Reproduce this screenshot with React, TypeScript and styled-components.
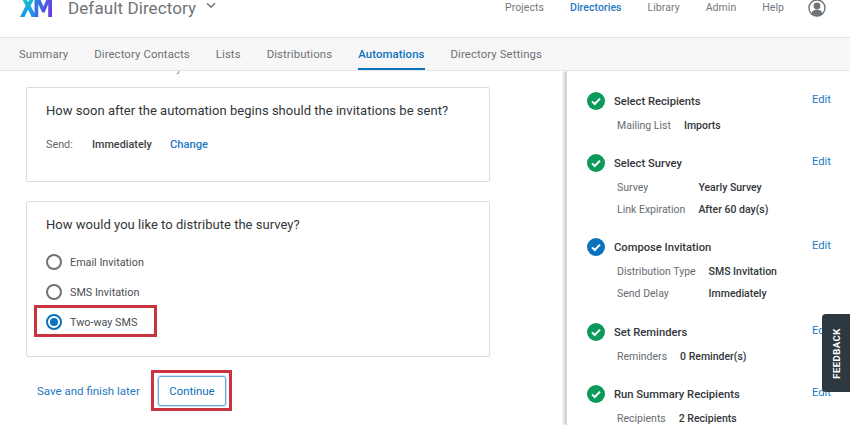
import React from "react";
import styled, { createGlobalStyle, css } from "styled-components";

const Global = createGlobalStyle`
  html, body { margin: 0; padding: 0; background: #fff; }
  body { font-family: Roboto, "Noto Sans", sans-serif; color: #32363a; }
  #root { width: 850px; height: 425px; overflow: hidden; }
`;

const Page = styled.div`
  position: relative;
  width: 850px;
  height: 425px;
  overflow: hidden;
  display: flex;
  flex-direction: column;
`;

const Header = styled.header`
  flex: 0 0 38px;
  box-sizing: border-box;
  border-bottom: 1px solid #e3e3e3;
  display: flex;
  align-items: flex-start;
  padding-left: 20px;
  overflow: hidden;
`;

const Logo = styled.svg`
  flex: none;
  width: 32px;
  height: 22px;
  margin-top: -5px;
`;

const DirectoryName = styled.span`
  margin-left: 16px;
  font-size: 17px;
  line-height: 16px;
  letter-spacing: 0.1px;
  color: #6f7478;
  white-space: nowrap;
`;

const Chevron = styled.svg`
  width: 10px;
  height: 7px;
  margin: 2px 0 0 10px;
  flex: none;
`;

const TopNav = styled.nav`
  margin-left: auto;
  display: flex;
  gap: 26px;
  align-items: center;
  height: 16px;
  padding-right: 24px;
`;

const TopLink = styled.span<{ $active?: boolean }>`
  font-size: 10.5px;
  line-height: 16px;
  letter-spacing: 0.05px;
  color: ${(p) => (p.$active ? "#1f7ac4" : "#73787c")};
  font-weight: ${(p) => (p.$active ? 500 : 400)};
`;

const Avatar = styled.svg`
  width: 18px;
  height: 18px;
  flex: none;
  margin-left: -2px;
`;

const Tabs = styled.nav`
  flex: 0 0 32px;
  box-sizing: border-box;
  background: #f7f7f7;
  border-bottom: 1px solid #e6e6e6;
  display: flex;
  gap: 26px;
  padding-left: 19px;
  position: relative;
  z-index: 2;
`;

const Tab = styled.span<{ $active?: boolean }>`
  height: 32px;
  box-sizing: border-box;
  padding-top: 8px;
  font-size: 11.4px;
  line-height: 16px;
  letter-spacing: 0.09px;
  white-space: nowrap;
  color: #6d7276;
  ${(p) =>
    p.$active &&
    css`
      color: #0b72bd;
      font-weight: 500;
      border-bottom: 2px solid #0b72bd;
    `}
`;

const Body = styled.div`
  flex: 1;
  min-height: 0;
  display: flex;
`;

const Main = styled.main`
  flex: 0 0 566px;
  box-sizing: border-box;
  padding-left: 26px;
  overflow: hidden;
`;

const ScrolledLine = styled.div`
  height: 3px;
  margin-bottom: 13px;
  overflow: hidden;
  font-size: 12px;
  line-height: 16px;
  color: #8a8e92;
  padding-left: 11px;
  & > span { display: block; margin-top: -12px; }
`;

const Card = styled.section<{ $height: number }>`
  box-sizing: border-box;
  width: 464px;
  height: ${(p) => p.$height}px;
  margin-bottom: 19px;
  border: 1px solid #dcdcdc;
  border-radius: 2px;
  padding: 13px 19px 0;
`;

const Question = styled.h2`
  margin: 0;
  font-size: 13px;
  line-height: 20px;
  font-weight: 400;
  letter-spacing: 0.03px;
  color: #32363a;
  white-space: nowrap;
`;

const SendRow = styled.div`
  margin-top: 14px;
  display: flex;
  font-size: 10.8px;
  line-height: 20px;
`;

const SendLabel = styled.span`
  width: 46px;
  color: #63686c;
`;

const SendValue = styled.span`
  width: 78px;
  font-weight: 500;
  color: #3c4044;
`;

const ChangeLink = styled.span`
  color: #1f7ac4;
  font-weight: 500;
  font-size: 11.2px;
`;

const RadioList = styled.div`
  margin-top: 17px;
  display: flex;
  flex-direction: column;
  gap: 10px;
`;

const RadioRow = styled.label<{ $marked?: boolean }>`
  position: relative;
  height: 20px;
  display: flex;
  align-items: center;
  gap: 8px;
  font-size: 10.8px;
  color: #4a4e52;
  ${(p) =>
    p.$marked &&
    css`
      &::after {
        content: "";
        position: absolute;
        left: -12px;
        top: -7px;
        width: 123px;
        height: 32px;
        box-sizing: border-box;
        border: 3px solid #c9353f;
      }
    `}
`;

const RadioDot = styled.span<{ $checked?: boolean }>`
  flex: none;
  box-sizing: border-box;
  width: 16px;
  height: 16px;
  border-radius: 50%;
  border: 2px solid ${(p) => (p.$checked ? "#0b72bd" : "#6f7377")};
  display: flex;
  align-items: center;
  justify-content: center;
  &::before {
    content: "";
    width: 8px;
    height: 8px;
    border-radius: 50%;
    background: ${(p) => (p.$checked ? "#0b72bd" : "transparent")};
  }
`;

const Actions = styled.div`
  display: flex;
  align-items: center;
  padding-left: 11px;
`;

const SaveLink = styled.span`
  width: 121px;
  font-size: 11.5px;
  color: #1f7ac4;
  white-space: nowrap;
`;

const ContinueButton = styled.button`
  position: relative;
  width: 68px;
  height: 30px;
  padding: 0;
  box-sizing: border-box;
  background: #fff;
  border: 1px solid #6aa9d8;
  border-radius: 3px;
  box-shadow: 0 0 0 1px #cfe3f3;
  color: #0b72bd;
  font-family: inherit;
  font-size: 11.4px;
  &::after {
    content: "";
    position: absolute;
    left: -8px;
    top: -7px;
    width: 81px;
    height: 41px;
    box-sizing: border-box;
    border: 3px solid #c9353f;
  }
`;

const Side = styled.aside`
  flex: 1;
  box-sizing: border-box;
  padding: 20px 0 0 20px;
  box-shadow: -2px 0 3px rgba(0, 0, 0, 0.22);
  border-left: 1px solid #d8d8d8;
  overflow: hidden;
`;

const Step = styled.div`
  margin-bottom: 17px;
  &:nth-child(3) { margin-bottom: 18px; }
`;

const StepHead = styled.div`
  display: flex;
  align-items: center;
  height: 20px;
  margin-bottom: 3px;
`;

const StepTitle = styled.span`
  margin-left: 9px;
  font-size: 11.2px;
  font-weight: 500;
  color: #32363a;
  white-space: nowrap;
`;

const EditLink = styled.span`
  margin-left: auto;
  margin-right: 19px;
  margin-top: -4px;
  font-size: 11.2px;
  color: #1f7ac4;
`;

const StepIcon = styled.svg`
  width: 18px;
  height: 18px;
  flex: none;
`;

const Details = styled.div`
  display: inline-grid;
  grid-template-columns: auto auto;
  column-gap: 13px;
  grid-auto-rows: 22px;
  align-items: center;
  margin-left: 30px;
  vertical-align: top;
  font-size: 10.5px;
`;

const DetailLabel = styled.span`
  color: #676c70;
  white-space: nowrap;
`;

const DetailValue = styled.span`
  color: #32363a;
  font-weight: 500;
  white-space: nowrap;
`;

const FeedbackTab = styled.div`
  position: absolute;
  right: 0;
  top: 314px;
  width: 28px;
  height: 78px;
  background: #2d3840;
  border-radius: 4px 0 0 4px;
  display: flex;
  align-items: center;
  justify-content: center;
  color: #fff;
  font-size: 9.6px;
  font-weight: 700;
  letter-spacing: 0.4px;
  & > span { transform: rotate(-90deg); white-space: nowrap; }
`;

const CheckBadge = ({ color }: { color: string }) => (
  <StepIcon viewBox="0 0 18 18">
    <circle cx="9" cy="9" r="9" fill={color} />
    <path d="M5 9.4l2.7 2.6L13 6.6" fill="none" stroke="#fff" strokeWidth="2" />
  </StepIcon>
);

const steps = [
  { title: "Select Recipients", color: "#0b9a5a", rows: [["Mailing List", "Imports"]] },
  { title: "Select Survey", color: "#0b9a5a", rows: [["Survey", "Yearly Survey"], ["Link Expiration", "After 60 day(s)"]] },
  { title: "Compose Invitation", color: "#0b72bd", rows: [["Distribution Type", "SMS Invitation"], ["Send Delay", "Immediately"]] },
  { title: "Set Reminders", color: "#0b9a5a", rows: [["Reminders", "0 Reminder(s)"]] },
  { title: "Run Summary Recipients", color: "#0b9a5a", rows: [["Recipients", "2 Recipients"]] },
];

const topLinks = ["Projects", "Directories", "Library", "Admin", "Help"];
const tabs = ["Summary", "Directory Contacts", "Lists", "Distributions", "Automations", "Directory Settings"];

export default function App() {
  return (
    <Page>
      <Global />
      <Header>
        <Logo viewBox="0 0 34 22" preserveAspectRatio="none">
          <defs>
            <linearGradient id="xg" x1="0" y1="0" x2="0.4" y2="1">
              <stop offset="0" stopColor="#14d8b8" />
              <stop offset="1" stopColor="#1b8ff0" />
            </linearGradient>
            <linearGradient id="mg" x1="0" y1="0" x2="1" y2="0.6">
              <stop offset="0" stopColor="#1d8fe6" />
              <stop offset="1" stopColor="#6a3fe0" />
            </linearGradient>
          </defs>
          <path d="M0 0h5l3.6 7.2L12.2 0h5l-6 10.8L17.6 22h-5.2L8.6 14.6 4.8 22H0l6-11.2z" fill="url(#xg)" />
          <path d="M15.4 22V0h4.2L25 11.6 30 0h4v22h-4V9l-3.8 8.4h-2.6L19.4 9v13z" fill="url(#mg)" />
        </Logo>
        <DirectoryName>Default Directory</DirectoryName>
        <Chevron viewBox="0 0 10 7">
          <path d="M1 1.2l4 4 4-4" fill="none" stroke="#6f7478" strokeWidth="1.5" />
        </Chevron>
        <TopNav>
          {topLinks.map((l) => (
            <TopLink key={l} $active={l === "Directories"}>{l}</TopLink>
          ))}
          <Avatar viewBox="0 0 18 18">
            <circle cx="9" cy="9" r="8" fill="#fff" stroke="#6f7478" strokeWidth="1.4" />
            <circle cx="9" cy="7" r="3.4" fill="#6f7478" />
            <path d="M3.2 14.4c1-2.6 3.2-3.6 5.8-3.6s4.8 1 5.8 3.6A8 8 0 0 1 9 17a8 8 0 0 1-5.8-2.6z" fill="#6f7478" />
          </Avatar>
        </TopNav>
      </Header>
      <Tabs>
        {tabs.map((t) => (
          <Tab key={t} $active={t === "Automations"}>{t}</Tab>
        ))}
      </Tabs>
      <Body>
        <Main>
          <ScrolledLine>
            <span>Send to all the members by the end of the list</span>
          </ScrolledLine>
          <Card $height={95}>
            <Question>How soon after the automation begins should the invitations be sent?</Question>
            <SendRow>
              <SendLabel>Send:</SendLabel>
              <SendValue>Immediately</SendValue>
              <ChangeLink>Change</ChangeLink>
            </SendRow>
          </Card>
          <Card $height={156}>
            <Question>How would you like to distribute the survey?</Question>
            <RadioList>
              <RadioRow><RadioDot />Email Invitation</RadioRow>
              <RadioRow><RadioDot />SMS Invitation</RadioRow>
              <RadioRow $marked><RadioDot $checked />Two-way SMS</RadioRow>
            </RadioList>
          </Card>
          <Actions>
            <SaveLink>Save and finish later</SaveLink>
            <ContinueButton>Continue</ContinueButton>
          </Actions>
        </Main>
        <Side>
          {steps.map((s) => (
            <Step key={s.title}>
              <StepHead>
                <CheckBadge color={s.color} />
                <StepTitle>{s.title}</StepTitle>
                <EditLink>Edit</EditLink>
              </StepHead>
              <Details>
                {s.rows.map(([a, b]) => (
                  <React.Fragment key={a}>
                    <DetailLabel>{a}</DetailLabel>
                    <DetailValue>{b}</DetailValue>
                  </React.Fragment>
                ))}
              </Details>
            </Step>
          ))}
        </Side>
      </Body>
      <FeedbackTab><span>FEEDBACK</span></FeedbackTab>
    </Page>
  );
}
